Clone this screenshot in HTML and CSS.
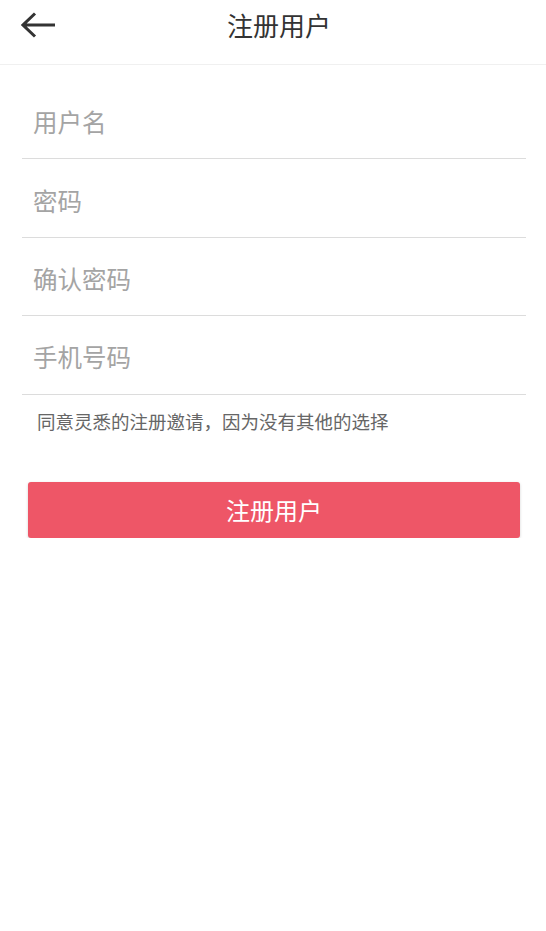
FILE: index.html
```html
<!DOCTYPE html>
<html lang="zh-CN">
<head>
    <meta charset="UTF-8">
    <meta name="viewport" content="width=device-width, initial-scale=1.0">
    <title>注册用户</title>
    <link rel="stylesheet" href="styles.css">
</head>
<body>

<!-- Top bar -->
<header class="top-bar">
    <button class="back-btn" aria-label="返回">
        <svg width="36" height="28" viewBox="0 0 36 28">
            <path d="M2 13 H34 M14 1.5 L2 13 L14 24.5" fill="none" stroke="#333" stroke-width="3" stroke-linecap="butt" stroke-linejoin="miter"/>
        </svg>
    </button>
    <h1 class="title">注册用户</h1>
</header>

<!-- Register form -->
<form class="register-form">
    <div class="field"><input type="text" placeholder="用户名"></div>
    <div class="field"><input type="password" placeholder="密码"></div>
    <div class="field"><input type="password" placeholder="确认密码"></div>
    <div class="field"><input type="tel" placeholder="手机号码"></div>

    <p class="agree">同意灵悉的注册邀请，因为没有其他的选择</p>

    <button type="button" class="submit-btn">注册用户</button>
</form>

</body>
</html>
```

FILE: styles.css
```css
body {
    margin: 0;
    background: #fff;
    font-family: "Noto Sans CJK SC", "Noto Sans", sans-serif;
    color: #333;
}

.top-bar {
    position: relative;
    height: 64px;
    border-bottom: 1px solid #f0f0f0;
    display: flex;
    align-items: center;
    justify-content: center;
}

.back-btn {
    position: absolute;
    left: 21px;
    top: 12px;
    padding: 0;
    border: none;
    background: none;
    line-height: 0;
}

.title {
    margin: 0 0 16px 12px;
    font-size: 26px;
    font-weight: normal;
    color: #333;
}

.register-form {
    padding: 16px 20px 0 22px;
}

.field {
    height: 77.4px;
    border-bottom: 1px solid #dcdcdc;
    display: flex;
    align-items: center;
}

.field input {
    width: 100%;
    border: none;
    outline: none;
    padding: 0 0 0 11px;
    margin-top: 4px;
    font-family: inherit;
    font-size: 24.5px;
    color: #333;
    background: transparent;
}

.field input::placeholder {
    color: #a4a4a4;
}

.agree {
    margin: 12px 0 0 15px;
    font-size: 18.5px;
    color: #666;
    line-height: 28px;
}

.submit-btn {
    display: block;
    width: 492px;
    height: 56px;
    margin: 47px 0 0 6px;
    border: none;
    border-radius: 3px;
    background: #ee5667;
    box-shadow: 0 1px 3px rgba(0, 0, 0, 0.18);
    color: #fff;
    font-family: inherit;
    font-size: 24px;
}
```
